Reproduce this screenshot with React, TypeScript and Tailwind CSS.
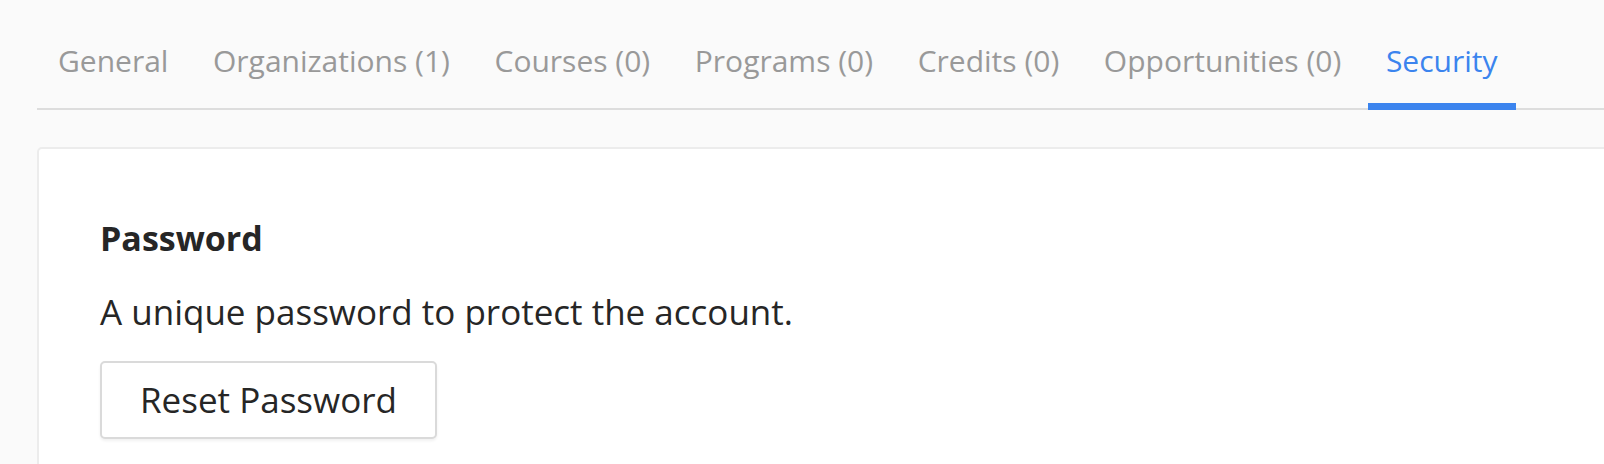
const tabs = [
  { label: "General" },
  { label: "Organizations (1)" },
  { label: "Courses (0)" },
  { label: "Programs (0)" },
  { label: "Credits (0)" },
  { label: "Opportunities (0)" },
  { label: "Security", active: true },
];

export default function App() {
  return (
    <div className="h-[464px] overflow-hidden bg-[#fafafa] pl-[37px] font-['Open_Sans',sans-serif]">
      {/* tab bar */}
      <nav className="flex gap-[8.6px] border-b-2 border-[#dddddd] pl-[3px] pt-[39px]">
        {tabs.map((tab) => (
          <div
            key={tab.label}
            className={`-mb-[2px] border-b-[7px] px-[18px] pb-[20px] text-[30px] leading-[44px] ${
              tab.active ? "border-[#3b84ee] text-[#3b84ee]" : "border-transparent text-[#999999]"
            }`}
          >
            {tab.label}
          </div>
        ))}
      </nav>

      {/* security card */}
      <div className="-mr-[20px] mt-[37px] h-[400px] rounded-tl-[5px] border-2 border-[#ececec] bg-white pl-[61px] pt-[65px]">
        <h3 className="text-[34px] font-bold leading-[49px] text-[#262626]">Password</h3>
        <p className="mt-[25px] text-[35px] leading-[48px] text-[#262626]">
          A unique password to protect the account.
        </p>
        <button className="mt-[25px] h-[78px] rounded-[5px] border-2 border-[#dadada] bg-white px-[38px] text-[35px] text-[#262626] shadow-[0_2px_3px_rgba(0,0,0,0.06)]">
          Reset Password
        </button>
      </div>
    </div>
  );
}
